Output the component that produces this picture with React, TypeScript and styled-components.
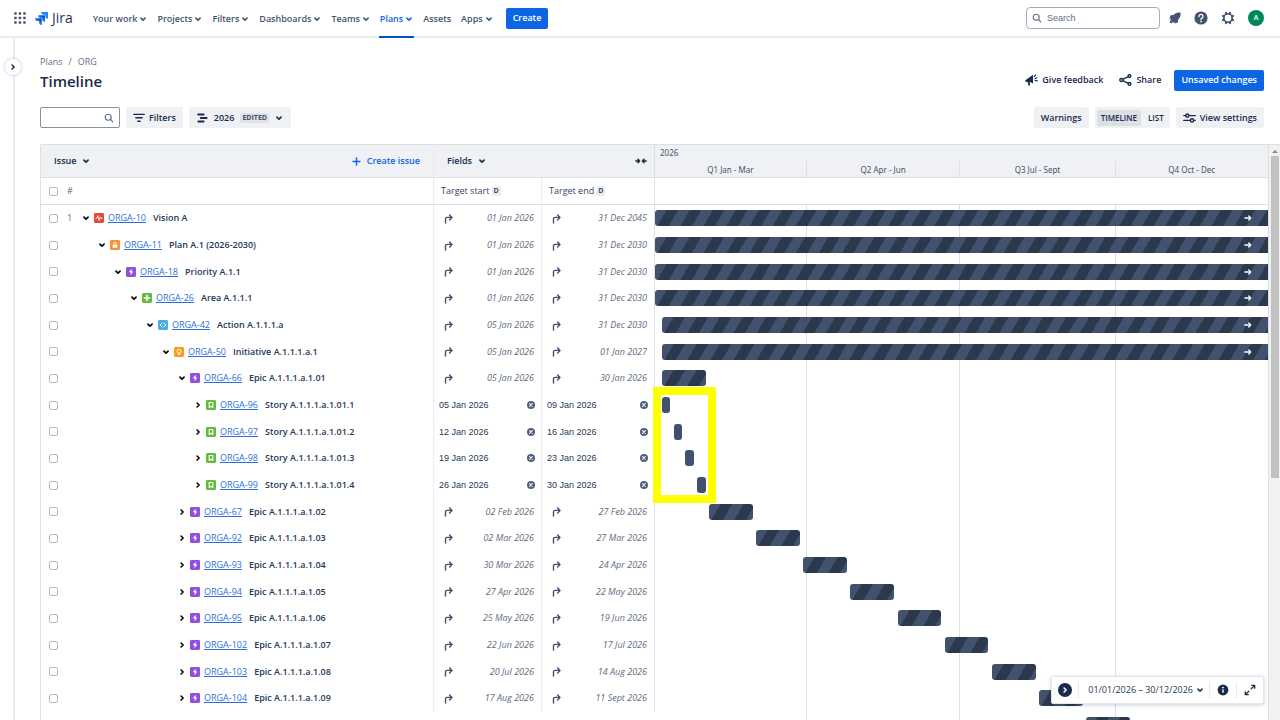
import React from "react";
import styled, { createGlobalStyle, css } from "styled-components";

const GlobalStyle = createGlobalStyle`
  *, *::before, *::after { box-sizing: border-box; }
  html, body, #root { height: 100%; }
  body {
    margin: 0;
    background: #ffffff;
    color: #172b4d;
    font-family: "Open Sans", "Noto Sans", sans-serif;
    font-size: 9px;
    line-height: 12px;
    overflow: hidden;
  }
  button, input { font: inherit; color: inherit; margin: 0; }
  button { border: 0; padding: 0; background: none; cursor: pointer; }
  svg { display: block; flex: none; }
`;

/* ---------- data ---------- */

type Kind = "vision" | "plan" | "bolt" | "area" | "action" | "idea" | "story";

interface Issue {
  id: string;
  name: string;
  kind: Kind;
  level: number;
  start: string;
  end: string;
  rolledUp: boolean;
  open: boolean;
}

const issue = (
  num: number, name: string, kind: Kind, level: number, start: string, end: string, open = false, rolledUp = true,
): Issue => ({ id: `ORGA-${num}`, name, kind, level, start, end, rolledUp, open });

const issues: Issue[] = [
  issue(10, "Vision A", "vision", 0, "01 Jan 2026", "31 Dec 2045", true),
  issue(11, "Plan A.1 (2026-2030)", "plan", 1, "01 Jan 2026", "31 Dec 2030", true),
  issue(18, "Priority A.1.1", "bolt", 2, "01 Jan 2026", "31 Dec 2030", true),
  issue(26, "Area A.1.1.1", "area", 3, "01 Jan 2026", "31 Dec 2030", true),
  issue(42, "Action A.1.1.1.a", "action", 4, "05 Jan 2026", "31 Dec 2030", true),
  issue(50, "Initiative A.1.1.1.a.1", "idea", 5, "05 Jan 2026", "01 Jan 2027", true),
  issue(66, "Epic A.1.1.1.a.1.01", "bolt", 6, "05 Jan 2026", "30 Jan 2026", true),
  issue(96, "Story A.1.1.1.a.1.01.1", "story", 7, "05 Jan 2026", "09 Jan 2026", false, false),
  issue(97, "Story A.1.1.1.a.1.01.2", "story", 7, "12 Jan 2026", "16 Jan 2026", false, false),
  issue(98, "Story A.1.1.1.a.1.01.3", "story", 7, "19 Jan 2026", "23 Jan 2026", false, false),
  issue(99, "Story A.1.1.1.a.1.01.4", "story", 7, "26 Jan 2026", "30 Jan 2026", false, false),
  issue(67, "Epic A.1.1.1.a.1.02", "bolt", 6, "02 Feb 2026", "27 Feb 2026"),
  issue(92, "Epic A.1.1.1.a.1.03", "bolt", 6, "02 Mar 2026", "27 Mar 2026"),
  issue(93, "Epic A.1.1.1.a.1.04", "bolt", 6, "30 Mar 2026", "24 Apr 2026"),
  issue(94, "Epic A.1.1.1.a.1.05", "bolt", 6, "27 Apr 2026", "22 May 2026"),
  issue(95, "Epic A.1.1.1.a.1.06", "bolt", 6, "25 May 2026", "19 Jun 2026"),
  issue(102, "Epic A.1.1.1.a.1.07", "bolt", 6, "22 Jun 2026", "17 Jul 2026"),
  issue(103, "Epic A.1.1.1.a.1.08", "bolt", 6, "20 Jul 2026", "14 Aug 2026"),
  issue(104, "Epic A.1.1.1.a.1.09", "bolt", 6, "17 Aug 2026", "11 Sept 2026"),
];

const schedule = [
  ...issues.map(({ start, end, rolledUp }) => ({ start, end, rolledUp })),
  { start: "14 Sept 2026", end: "09 Oct 2026", rolledUp: true },
];

const quarters = [
  { label: "Q1 Jan - Mar", days: 90 },
  { label: "Q2 Apr - Jun", days: 91 },
  { label: "Q3 Jul - Sept", days: 92 },
  { label: "Q4 Oct - Dec", days: 91 },
];

const RANGE_DAYS = 364;
const months = ["Jan", "Feb", "Mar", "Apr", "May", "Jun", "Jul", "Aug", "Sept", "Oct", "Nov", "Dec"];

const dayIndex = (date: string) => {
  const [d, m, y] = date.split(" ");
  return Math.round((Date.UTC(+y, months.indexOf(m), +d) - Date.UTC(2026, 0, 1)) / 86400000);
};

/* ---------- icons ---------- */

const Chevron = ({ right, size = 8 }: { right?: boolean; size?: number }) => (
  <svg width={size} height={size} viewBox="0 0 8 8" fill="none" stroke="currentColor" strokeWidth="1.6" strokeLinecap="round" strokeLinejoin="round">
    <path d={right ? "M3.1 2 5.1 4 3.1 6" : "M1.9 3.1 4 5.1 6.1 3.1"} />
  </svg>
);

const GridIcon = () => (
  <svg width="12" height="12" viewBox="0 0 12 12" fill="#42526e">
    {[0, 4.5, 9].map((y) => [0, 4.5, 9].map((x) => <rect key={`${x}-${y}`} x={x + 0.2} y={y + 0.2} width="2.5" height="2.5" rx="0.6" />))}
  </svg>
);

const JiraMark = () => (
  <svg width="13" height="13" viewBox="0 0 24 24">
    <defs>
      <linearGradient id="jira-a" x1="0.9" y1="0.1" x2="0.4" y2="0.6">
        <stop offset="0.15" stopColor="#0052cc" />
        <stop offset="1" stopColor="#2684ff" />
      </linearGradient>
    </defs>
    <path fill="#2684ff" d="M23.3 0H11.6a5.2 5.2 0 0 0 5.2 5.2h2.2v2.1a5.2 5.2 0 0 0 5.2 5.2V1a1 1 0 0 0-.9-1z" />
    <path fill="url(#jira-a)" d="M17.5 5.8H5.8A5.2 5.2 0 0 0 11 11h2.2v2.1a5.2 5.2 0 0 0 5.2 5.2V6.8a1 1 0 0 0-.9-1z" />
    <path fill="url(#jira-a)" d="M11.7 11.6H0a5.2 5.2 0 0 0 5.2 5.2h2.2v2.1a5.2 5.2 0 0 0 5.2 5.2V12.6a1 1 0 0 0-.9-1z" />
  </svg>
);

const SearchIcon = ({ color = "#626f86" }: { color?: string }) => (
  <svg width="10" height="10" viewBox="0 0 10 10" fill="none" stroke={color} strokeWidth="1.1" strokeLinecap="round">
    <circle cx="4.2" cy="4.2" r="3" />
    <path d="m6.5 6.5 2.3 2.3" />
  </svg>
);

const RocketIcon = () => (
  <svg width="12" height="12" viewBox="0 0 12 12" fill="#44546f">
    <path d="M11.5.5C8.4.1 6.1 1 4.5 2.9L1.6 3.3.5 6.4l1.5.3-.7 1.2 2.8 2.8 1.2-.7.4 1.6 3.1-1.2.4-3c1.9-1.6 2.7-3.8 2.3-6.9z" />
    <path d="M1.6 8.4.8 9.3l.2 1.7 1.7.2.9-.8z" />
  </svg>
);

const HelpIcon = () => (
  <svg width="14" height="14" viewBox="0 0 14 14" fill="none">
    <circle cx="7" cy="7" r="6.6" fill="#44546f" />
    <path d="M5 5.5a2 2 0 1 1 2.9 1.7c-.6.3-.9.6-.9 1.2" stroke="#fff" strokeWidth="1.3" strokeLinecap="round" />
    <circle cx="7" cy="10.4" r="0.85" fill="#fff" />
  </svg>
);

const GearIcon = () => (
  <svg width="14" height="14" viewBox="0 0 14 14" fill="none" stroke="#44546f">
    <circle cx="7" cy="7" r="4.2" strokeWidth="1.6" />
    {[0, 45, 90, 135, 180, 225, 270, 315].map((a) => (
      <path key={a} d="M7 2.6V1.6" strokeWidth="2.2" strokeLinecap="round" transform={`rotate(${a + 22.5} 7 7)`} />
    ))}
  </svg>
);

const MegaphoneIcon = () => (
  <svg width="13" height="12" viewBox="0 0 13 12">
    <path fill="#172b4d" d="M8 .8v8.6L5.6 8.2l-1.1-.2.6 2.6c.1.6-.2 1-.7 1.1-.5.1-1-.1-1.1-.7L2.7 8 .8 7.8C0 7.6 0 6.3.7 6z" />
    <path d="M9.3 2.6 10.6.9M10 4.6l2-.8M10 6.4l2.3.5" stroke="#172b4d" strokeWidth="1.1" strokeLinecap="round" fill="none" />
  </svg>
);

const ShareIcon = () => (
  <svg width="13" height="12" viewBox="0 0 13 12" fill="none" stroke="#172b4d" strokeWidth="1.4">
    <circle cx="2.3" cy="6" r="1.5" />
    <circle cx="10.5" cy="2.1" r="1.4" />
    <circle cx="10.5" cy="9.9" r="1.4" />
    <path d="m3.7 5.3 5.5-2.6M3.7 6.7l5.5 2.6" />
  </svg>
);

const FilterIcon = () => (
  <svg width="12" height="10" viewBox="0 0 12 10" stroke="#172b4d" strokeWidth="1.4" strokeLinecap="round">
    <path d="M.8 1.4h10.4M2.8 4.8h6.4M4.8 8.2h2.4" />
  </svg>
);

const PlanIcon = () => (
  <svg width="11" height="10" viewBox="0 0 11 10" stroke="#172b4d" strokeWidth="2" strokeLinecap="round">
    <path d="M1.2 1.4h5.4M3.8 4.9h5.8M1.4 8.5h5.2" />
  </svg>
);

const SettingsIcon = () => (
  <svg width="13" height="10" viewBox="0 0 13 10" stroke="#172b4d" strokeWidth="1.4" strokeLinecap="round" fill="none">
    <path d="M.8 2.6h1.8M6.4 2.6h5.8M.8 7.4h6.2M10.8 7.4h1.4" />
    <circle cx="4.3" cy="2.6" r="1.6" />
    <circle cx="9" cy="7.4" r="1.6" />
  </svg>
);

const PlusIcon = () => (
  <svg width="9" height="9" viewBox="0 0 9 9" stroke="#0c66e4" strokeWidth="1.4" strokeLinecap="round">
    <path d="M4.5 1v7M1 4.5h7" />
  </svg>
);

const CollapseIcon = () => (
  <svg width="12" height="8" viewBox="0 0 12 8" fill="none" stroke="#172b4d" strokeWidth="1.5" strokeLinecap="round" strokeLinejoin="round">
    <path d="M.8 4h3.4M3 2.4 4.6 4 3 5.6M11.2 4H7.8M9 2.4 7.4 4 9 5.6" />
  </svg>
);

const RollUpIcon = () => (
  <svg width="9" height="11" viewBox="0 0 9 11" fill="none" stroke="#42526e" strokeWidth="1.4" strokeLinecap="round" strokeLinejoin="round">
    <path d="M1.5 10V5.8a1.4 1.4 0 0 1 1.4-1.4h4.6M5.6 1.9 8 4.4 5.6 6.9" />
  </svg>
);

const ClearIcon = () => (
  <svg width="8" height="8" viewBox="0 0 8 8">
    <circle cx="4" cy="4" r="4" fill="#505f79" />
    <path d="M2.7 2.7l2.6 2.6M5.3 2.7 2.7 5.3" stroke="#fff" strokeWidth="1.1" strokeLinecap="round" />
  </svg>
);

const ArrowIcon = () => (
  <svg width="8" height="8" viewBox="0 0 8 8" fill="none" stroke="#fff" strokeWidth="1.4" strokeLinecap="round" strokeLinejoin="round">
    <path d="M.9 4h5.8M4.8 2.1 6.7 4 4.8 5.9" />
  </svg>
);

const InfoIcon = () => (
  <svg width="12" height="12" viewBox="0 0 12 12">
    <circle cx="6" cy="6" r="5.4" fill="#172b4d" />
    <circle cx="6" cy="3.6" r="0.9" fill="#fff" />
    <rect x="5.3" y="5.2" width="1.4" height="3.8" rx="0.7" fill="#fff" />
  </svg>
);

const ExpandIcon = () => (
  <svg width="12" height="12" viewBox="0 0 12 12" fill="none" stroke="#172b4d" strokeWidth="1.3" strokeLinecap="round" strokeLinejoin="round">
    <path d="M7.8 1.3h2.9v2.9M10.4 1.6 7.2 4.8M4.2 10.7H1.3V7.8M1.6 10.4l3.2-3.2" />
  </svg>
);

const kindColor: Record<Kind, string> = {
  vision: "#e5493a",
  plan: "#f79233",
  bolt: "#904ee2",
  area: "#63ba3c",
  action: "#4bade8",
  idea: "#ff991f",
  story: "#63ba3c",
};

const kindGlyph: Record<Kind, React.ReactNode> = {
  vision: <path d="M1.6 5.4h1.2l1-2.6 1.3 4.6L6.4 4l.8 1.4h1.2" fill="none" stroke="#fff" strokeWidth="0.9" strokeLinejoin="round" />,
  plan: (
    <g>
      <rect x="2.7" y="4.4" width="4.6" height="3.4" rx="0.5" fill="#fff" />
      <path d="M3.8 4.4V3.5a1.2 1.2 0 0 1 2.4 0v.9" fill="none" stroke="#fff" strokeWidth="0.9" />
    </g>
  ),
  bolt: <path d="M5.6 1.7 2.8 5.3h1.9v3l2.6-3.7H5.6z" fill="#fff" />,
  area: <path d="M5 2.4v5.2M2.4 5h5.2" stroke="#fff" strokeWidth="1.6" strokeLinecap="round" />,
  action: <path d="M4 3.1 2.1 5 4 6.9M6 3.1 7.9 5 6 6.9" fill="none" stroke="#fff" strokeWidth="1" strokeLinecap="round" strokeLinejoin="round" />,
  idea: (
    <g fill="none" stroke="#fff" strokeWidth="0.9">
      <circle cx="5" cy="4.2" r="1.9" />
      <path d="M4.2 7.3h1.6M5 6v1.4" strokeWidth="1.2" />
    </g>
  ),
  story: <path d="M3.2 2.5h3.6v5L5 6.2 3.2 7.5z" fill="none" stroke="#fff" strokeWidth="1.1" strokeLinejoin="round" />,
};

const KindIcon = ({ kind }: { kind: Kind }) => (
  <svg width="10" height="10" viewBox="0 0 10 10">
    <rect width="10" height="10" rx="1.4" fill={kindColor[kind]} />
    {kindGlyph[kind]}
  </svg>
);

/* ---------- top navigation ---------- */

const Shell = styled.div`
  display: flex;
  flex-direction: column;
  height: 100vh;
`;

const TopNav = styled.header`
  display: flex;
  align-items: center;
  flex: none;
  height: 38px;
  padding: 0 16px 0 14px;
  border-bottom: 2px solid #ebecf0;
`;

const Logo = styled.a`
  display: flex;
  align-items: center;
  gap: 4px;
  margin: 0 19px 0 9px;
  color: #253858;
  font-size: 14px;
  line-height: 20px;
  font-weight: 500;
  text-decoration: none;
`;

const NavList = styled.nav`
  display: flex;
  align-self: stretch;
  gap: 8px;
`;

const NavItem = styled.button<{ $active?: boolean }>`
  display: flex;
  align-items: center;
  gap: 2px;
  height: 38px;
  padding: 2px 1px 0;
  border-bottom: 2px solid ${(p) => (p.$active ? "#0052cc" : "transparent")};
  color: ${(p) => (p.$active ? "#0c66e4" : "#44546f")};
  font-weight: 600;
`;

const PrimaryButton = styled.button`
  height: 21px;
  padding: 0 7px;
  border-radius: 2px;
  background: #0c66e4;
  color: #ffffff;
  font-weight: 600;
`;

const CreateSlot = styled.div`
  margin-left: 12px;
`;

const NavTools = styled.div`
  display: flex;
  align-items: center;
  gap: 9px;
  margin-left: auto;
`;

const SearchField = styled.label<{ $compact?: boolean }>`
  display: flex;
  align-items: center;
  gap: 5px;
  width: ${(p) => (p.$compact ? "80px" : "134px")};
  height: ${(p) => (p.$compact ? "21px" : "22px")};
  padding: 0 5px;
  border: 1px solid ${(p) => (p.$compact ? "#8590a2" : "#a5adba")};
  border-radius: ${(p) => (p.$compact ? "2px" : "4px")};

  input {
    flex: 1;
    min-width: 0;
    padding: 0;
    border: 0;
    outline: 0;
    background: none;
    font-family: "Liberation Sans", Arial, sans-serif;
  }
  input::placeholder { color: #626f86; opacity: 1; }
`;

const Avatar = styled.button`
  width: 16px;
  height: 16px;
  border-radius: 50%;
  background: #00875a;
  color: #ffffff;
  font-size: 7px;
  line-height: 16px;
  font-weight: 600;
`;

/* ---------- page ---------- */

const Body = styled.div`
  display: flex;
  flex: 1;
  min-height: 0;
`;

const Rail = styled.aside`
  position: relative;
  flex: none;
  width: 15px;
  border-right: 2px solid #ebecf0;
`;

const RailToggle = styled.button`
  position: absolute;
  top: 21px;
  left: 5px;
  display: grid;
  place-items: center;
  width: 16px;
  height: 16px;
  border-radius: 50%;
  background: #ffffff;
  box-shadow: 0 0 3px rgba(9, 30, 66, 0.3);
`;

const Page = styled.main`
  display: flex;
  flex-direction: column;
  flex: 1;
  min-width: 0;
  padding: 18px 0 0 25px;
`;

const Breadcrumbs = styled.nav`
  display: flex;
  gap: 6px;
  color: #626f86;

  a { color: inherit; text-decoration: none; }
`;

const TitleRow = styled.div`
  display: flex;
  align-items: center;
  justify-content: space-between;
  height: 24px;
  padding-right: 16px;
`;

const Title = styled.h1`
  margin: 0;
  padding-top: 2px;
  font-size: 15px;
  line-height: 20px;
  font-weight: 600;
`;

const Group = styled.div<{ $gap: number }>`
  display: flex;
  align-items: center;
  gap: ${(p) => p.$gap}px;
`;

const PlainButton = styled.button`
  display: flex;
  align-items: center;
  gap: 4px;
  color: #172b4d;
  font-weight: 600;
`;

const Toolbar = styled.div`
  display: flex;
  align-items: center;
  justify-content: space-between;
  margin-top: 15px;
  padding-right: 16px;
`;

const SoftButton = styled.button<{ $menu?: boolean }>`
  display: flex;
  align-items: center;
  gap: ${(p) => (p.$menu ? "6px" : "4px")};
  height: 21px;
  padding: 0 ${(p) => (p.$menu ? "8px" : "7px")};
  border-radius: 2px;
  background: #f0f1f4;
  color: #172b4d;
  font-weight: 600;
`;

const Lozenge = styled.span`
  padding: 0 2px;
  border-radius: 2px;
  background: #dfe1e6;
  color: #42526e;
  font-size: 7px;
  line-height: 10px;
  font-weight: 700;
`;

const Toggle = styled.div`
  display: flex;
  align-items: center;
  gap: 3px;
  height: 21px;
  padding: 0 2px;
  border-radius: 2px;
  background: #f0f1f4;
`;

const ToggleOption = styled.button<{ $on?: boolean }>`
  height: 16px;
  padding: 0 4px;
  border-radius: 2px;
  background: ${(p) => (p.$on ? "#dcdfe4" : "transparent")};
  color: #172b4d;
  font-size: 8px;
  font-weight: 600;
`;

/* ---------- board ---------- */

const Board = styled.section`
  display: flex;
  flex: 1;
  min-height: 0;
  margin-top: 16px;
  border-top: 1px solid #dcdfe4;
  border-left: 1px solid #dcdfe4;
  border-top-left-radius: 2px;
  overflow: hidden;
`;

const rowHeights = css`
  height: 27px;
  &:nth-child(3n) { height: 26px; }
`;

const IssueTable = styled.table`
  flex: none;
  align-self: flex-start;
  width: 614px;
  table-layout: fixed;
  border-collapse: separate;
  border-spacing: 0;

  th, td { padding: 0; text-align: left; font-weight: 400; }
  td { padding-bottom: 1px; }
  th + th, td + td { border-left: 1px solid #ebecf0; }
  tr > :last-child { border-right: 1px solid #dcdfe4; }
`;

const HeadRow = styled.tr`
  height: 33px;
  th { background: #f0f1f4; border-bottom: 1px solid #dcdfe4; }
`;

const ColumnRow = styled.tr`
  height: 27px;
  th { border-bottom: 1px solid #dcdfe4; }
`;

const IssueRow = styled.tr`
  ${rowHeights}
`;

const HeadCell = styled.div`
  display: flex;
  align-items: center;
  justify-content: space-between;
  padding: 0 13px;
`;

const FieldsHead = styled(HeadCell)`
  padding: 0 7px 0 13px;
`;

const HeadButton = styled.button<{ $accent?: boolean }>`
  display: flex;
  align-items: center;
  gap: 6px;
  color: ${(p) => (p.$accent ? "#0c66e4" : "#172b4d")};
  font-weight: 600;
`;

const ColumnLabel = styled.div`
  display: flex;
  align-items: center;
  gap: 2px;
  padding-left: 7px;
  color: #344563;
`;

const Tag = styled.span`
  padding: 0 2px;
  border-radius: 2px;
  background: #ebecf0;
  color: #42526e;
  font-size: 7px;
  line-height: 10px;
  font-weight: 700;
`;

const CheckBox = styled.input.attrs({ type: "checkbox" })`
  appearance: none;
  flex: none;
  width: 9px;
  height: 9px;
  border: 1px solid #b3b9c4;
  border-radius: 2px;
  background: #ffffff;
`;

const IssueCell = styled.div`
  display: flex;
  align-items: center;
  padding-left: 8px;
`;

const RowNumber = styled.span`
  width: 14px;
  margin-left: 9px;
  color: #626f86;
`;

const TreeItem = styled.div<{ $level: number }>`
  display: flex;
  align-items: center;
  gap: 4px;
  padding-left: ${(p) => p.$level * 16}px;
`;

const Twisty = styled.button`
  display: grid;
  place-items: center;
  width: 9px;
  height: 12px;
  color: #000000;
`;

const IssueLink = styled.a`
  color: #2a6fdb;
  text-decoration: underline;
`;

const Summary = styled.span`
  margin-left: 3px;
  font-weight: 600;
  color: #253858;
`;

const RolledDate = styled.div`
  display: flex;
  align-items: center;
  justify-content: space-between;
  padding: 0 7px 0 10px;
  color: #5e6c84;
  font-style: italic;
`;

const OwnDate = styled.div`
  display: flex;
  align-items: center;
  justify-content: space-between;
  padding: 0 6px 0 5px;
  color: #253858;
  font-family: "Liberation Sans", Arial, sans-serif;
`;

const IconButton = styled.button`
  display: grid;
  place-items: center;
`;

const Chart = styled.div`
  position: relative;
  flex: 1;
  min-width: 0;
  overflow: visible;
`;

const ChartHead = styled.div`
  display: flex;
  flex-direction: column;
  justify-content: space-between;
  height: 33px;
  border-bottom: 1px solid #dcdfe4;
  background: #f0f1f4;
  color: #44546f;
  font-family: "Noto Sans", "Open Sans", sans-serif;
  font-size: 8px;
`;

const Year = styled.div`
  padding: 2px 5px 0;
`;

const QuarterRow = styled.div`
  display: flex;
  height: 16px;
`;

const Quarter = styled.div<{ $days: number }>`
  flex: ${(p) => p.$days} 1 0;
  text-align: center;
  line-height: 17px;
  & + & { border-left: 1px solid #dcdfe4; }
`;

const ChartSpacer = styled.div`
  height: 27px;
  border-bottom: 1px solid #dcdfe4;
`;

const ChartBody = styled.div`
  position: relative;
`;

const GridLines = styled.div`
  position: absolute;
  inset: 0;
  display: flex;
`;

const BarRow = styled.div`
  position: relative;
  padding-top: 5px;
  ${rowHeights}
`;

const Bar = styled.div<{ $striped: boolean; $clipped: boolean }>`
  display: flex;
  align-items: center;
  justify-content: flex-end;
  height: 16px;
  padding-right: ${(p) => (p.$clipped ? "16px" : "0")};
  border-radius: ${(p) => (p.$clipped ? "3px 0 0 3px" : "3px")};
  background: ${(p) =>
    p.$striped ? "repeating-linear-gradient(120deg, #42526e 0 10px, #2c394c 10px 20px)" : "#42526e"};
`;

const Highlight = styled.div`
  position: absolute;
  top: 182px;
  left: -2px;
  width: 63px;
  height: 116px;
  border: 8px solid #ffff00;
`;

const ScrollTrack = styled.div`
  display: flex;
  flex-direction: column;
  align-items: center;
  flex: none;
  width: 12px;
  border-left: 1px solid #dcdfe4;
  background: #f1f1f1;
`;

const ScrollArrow = styled.div`
  width: 0;
  margin: 5px 0 3px;
  border: 3px solid transparent;
  border-top: 0;
  border-bottom-color: #8a8a8a;
`;

const ScrollThumb = styled.div`
  width: 8px;
  height: 56%;
  background: #c1c1c1;
`;

const RangeBar = styled.div`
  position: absolute;
  right: 16px;
  bottom: 16px;
  display: flex;
  align-items: center;
  height: 28px;
  padding: 0 7px 0 6px;
  border: 1px solid #e4e6ea;
  border-radius: 2px;
  background: #ffffff;
  box-shadow: 0 1px 4px rgba(9, 30, 66, 0.2);
  color: #253858;
`;

const RangePart = styled.button`
  display: flex;
  align-items: center;
  gap: 3px;
  height: 16px;
  padding: 0 7px;
  font-weight: 500;
  & + & { border-left: 1px solid #ebecf0; }
  &:first-child { padding-left: 0; padding-right: 6px; }
  &:last-child { padding-right: 0; }
  &:nth-child(2) { padding: 0 5px 0 9px; }
`;

const Disc = styled.span`
  display: grid;
  place-items: center;
  width: 14px;
  height: 14px;
  border-radius: 50%;
  background: #172b4d;
  color: #ffffff;
`;

/* ---------- components ---------- */

const menu = ["Your work", "Projects", "Filters", "Dashboards", "Teams", "Plans", "Assets", "Apps"];

const DateCell = ({ value, rolledUp, label }: { value: string; rolledUp: boolean; label: string }) =>
  rolledUp ? (
    <RolledDate>
      <RollUpIcon />
      {value}
    </RolledDate>
  ) : (
    <OwnDate>
      {value}
      <IconButton aria-label={`Clear ${label}`}>
        <ClearIcon />
      </IconButton>
    </OwnDate>
  );

const ScheduleBar = ({ start, end, rolledUp }: { start: string; end: string; rolledUp: boolean }) => {
  const from = dayIndex(start);
  const to = Math.min(dayIndex(end) + 1, RANGE_DAYS);
  const clipped = to === RANGE_DAYS;
  return (
    <Bar
      $striped={rolledUp}
      $clipped={clipped}
      style={{ marginLeft: `${(from / RANGE_DAYS) * 100}%`, width: `${((to - from) / RANGE_DAYS) * 100}%` }}
    >
      {clipped && <ArrowIcon />}
    </Bar>
  );
};

export default function App() {
  return (
    <Shell>
      <GlobalStyle />
      <TopNav>
        <IconButton aria-label="App switcher">
          <GridIcon />
        </IconButton>
        <Logo href="#">
          <JiraMark />
          Jira
        </Logo>
        <NavList aria-label="Main">
          {menu.map((m) => (
            <NavItem key={m} $active={m === "Plans"}>
              {m}
              {m !== "Assets" && <Chevron />}
            </NavItem>
          ))}
        </NavList>
        <CreateSlot>
          <PrimaryButton>Create</PrimaryButton>
        </CreateSlot>
        <NavTools>
          <SearchField>
            <SearchIcon />
            <input type="search" placeholder="Search" aria-label="Search" />
          </SearchField>
          <Group $gap={13}>
            <IconButton aria-label="What's new"><RocketIcon /></IconButton>
            <IconButton aria-label="Help"><HelpIcon /></IconButton>
            <IconButton aria-label="Settings"><GearIcon /></IconButton>
            <Avatar aria-label="Account">A</Avatar>
          </Group>
        </NavTools>
      </TopNav>

      <Body>
        <Rail>
          <RailToggle aria-label="Expand sidebar">
            <Chevron right />
          </RailToggle>
        </Rail>
        <Page>
          <Breadcrumbs aria-label="Breadcrumbs">
            <a href="#">Plans</a>
            <span>/</span>
            <a href="#">ORG</a>
          </Breadcrumbs>
          <TitleRow>
            <Title>Timeline</Title>
            <Group $gap={13}>
              <Group $gap={16}>
                <PlainButton><MegaphoneIcon />Give feedback</PlainButton>
                <PlainButton><ShareIcon />Share</PlainButton>
              </Group>
              <PrimaryButton>Unsaved changes</PrimaryButton>
            </Group>
          </TitleRow>
          <Toolbar>
            <Group $gap={6}>
              <SearchField $compact>
                <input type="text" aria-label="Search issues" />
                <SearchIcon />
              </SearchField>
              <SoftButton><FilterIcon />Filters</SoftButton>
              <SoftButton $menu>
                <PlanIcon />
                2026
                <Lozenge>EDITED</Lozenge>
                <Chevron />
              </SoftButton>
            </Group>
            <Group $gap={6}>
              <SoftButton>Warnings</SoftButton>
              <Toggle>
                <ToggleOption $on>TIMELINE</ToggleOption>
                <ToggleOption>LIST</ToggleOption>
              </Toggle>
              <SoftButton><SettingsIcon />View settings</SoftButton>
            </Group>
          </Toolbar>

          <Board>
            <IssueTable>
              <colgroup>
                <col width="392" />
                <col width="108" />
                <col width="114" />
              </colgroup>
              <thead>
                <HeadRow>
                  <th>
                    <HeadCell>
                      <HeadButton>Issue<Chevron /></HeadButton>
                      <HeadButton $accent><PlusIcon />Create issue</HeadButton>
                    </HeadCell>
                  </th>
                  <th colSpan={2}>
                    <FieldsHead>
                      <HeadButton>Fields<Chevron /></HeadButton>
                      <IconButton aria-label="Collapse fields"><CollapseIcon /></IconButton>
                    </FieldsHead>
                  </th>
                </HeadRow>
                <ColumnRow>
                  <th>
                    <IssueCell>
                      <CheckBox aria-label="Select all issues" />
                      <RowNumber>#</RowNumber>
                    </IssueCell>
                  </th>
                  <th><ColumnLabel>Target start<Tag>D</Tag></ColumnLabel></th>
                  <th><ColumnLabel>Target end<Tag>D</Tag></ColumnLabel></th>
                </ColumnRow>
              </thead>
              <tbody>
                {issues.map((it, i) => (
                  <IssueRow key={it.id}>
                    <td>
                      <IssueCell>
                        <CheckBox aria-label={`Select ${it.id}`} />
                        <RowNumber>{i === 0 ? "1" : ""}</RowNumber>
                        <TreeItem $level={it.level}>
                          <Twisty aria-label={`Toggle ${it.id}`} aria-expanded={it.open}>
                            <Chevron right={!it.open} />
                          </Twisty>
                          <KindIcon kind={it.kind} />
                          <IssueLink href="#">{it.id}</IssueLink>
                          <Summary>{it.name}</Summary>
                        </TreeItem>
                      </IssueCell>
                    </td>
                    <td><DateCell value={it.start} rolledUp={it.rolledUp} label="target start" /></td>
                    <td><DateCell value={it.end} rolledUp={it.rolledUp} label="target end" /></td>
                  </IssueRow>
                ))}
              </tbody>
            </IssueTable>

            <Chart>
              <ChartHead>
                <Year>2026</Year>
                <QuarterRow>
                  {quarters.map((q) => <Quarter key={q.label} $days={q.days}>{q.label}</Quarter>)}
                </QuarterRow>
              </ChartHead>
              <ChartSpacer />
              <ChartBody>
                <GridLines>
                  {quarters.map((q) => <Quarter key={q.label} $days={q.days} />)}
                </GridLines>
                <div>
                  {schedule.map((s, i) => <BarRow key={i}><ScheduleBar {...s} /></BarRow>)}
                </div>
                <Highlight />
              </ChartBody>
            </Chart>

            <ScrollTrack>
              <ScrollArrow />
              <ScrollThumb />
            </ScrollTrack>
          </Board>
        </Page>
      </Body>

      <RangeBar>
        <RangePart aria-label="Jump"><Disc><Chevron right /></Disc></RangePart>
        <RangePart>01/01/2026 – 30/12/2026<Chevron /></RangePart>
        <RangePart aria-label="Legend"><InfoIcon /></RangePart>
        <RangePart aria-label="Full screen"><ExpandIcon /></RangePart>
      </RangeBar>
    </Shell>
  );
}
